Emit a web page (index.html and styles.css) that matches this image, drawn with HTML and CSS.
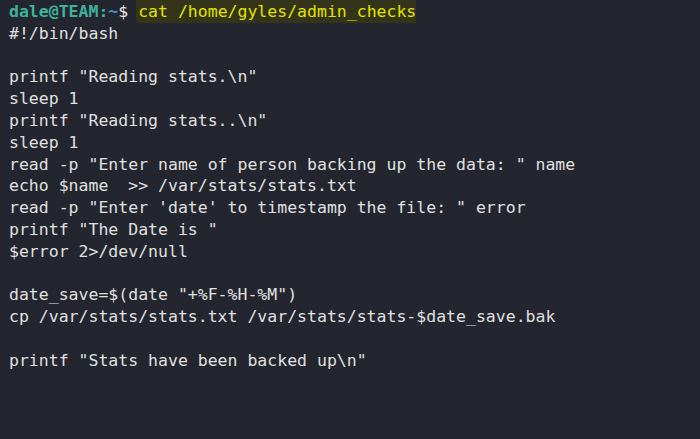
FILE: index.html
```html
<!DOCTYPE html>
<html>
<head>
<meta charset="utf-8">
<link rel="stylesheet" href="styles.css">
</head>
<body>
<pre class="term"><span class="user">dale@TEAM</span><span class="colon">:</span><span class="path">~</span><span class="dollar">$</span> <span class="cmd">cat /home/gyles/admin_checks</span>
#!/bin/bash

printf "Reading stats.\n"
sleep 1
printf "Reading stats..\n"
sleep 1
read -p "Enter name of person backing up the data: " name
echo $name  &gt;&gt; /var/stats/stats.txt
read -p "Enter 'date' to timestamp the file: " error
printf "The Date is "
$error 2&gt;/dev/null

date_save=$(date "+%F-%H-%M")
cp /var/stats/stats.txt /var/stats/stats-$date_save.bak

printf "Stats have been backed up\n"
</pre>
</body>
</html>
```
FILE: styles.css
```css
html, body {
  margin: 0;
  padding: 0;
  background: #23262e;
  height: 100%;
}
.term {
  margin: 0;
  padding: 1px 0 0 9px;
  font-family: "DejaVu Sans Mono", "Liberation Mono", monospace;
  font-size: 16.5px;
  line-height: 21.8px;
  color: #e0e0e0;
  white-space: pre;
}
.user {
  color: #3db39c;
  font-weight: bold;
}
.colon {
  color: #3db39c;
  font-weight: bold;
}
.path {
  color: #4f8fd6;
  font-weight: bold;
}
.dollar {
  color: #e8e8e8;
}
.cmd {
  color: #e3e300;
  background: #33341a;
  padding: 2px 0 2px 2px;
  margin-left: -2px;
}
```
